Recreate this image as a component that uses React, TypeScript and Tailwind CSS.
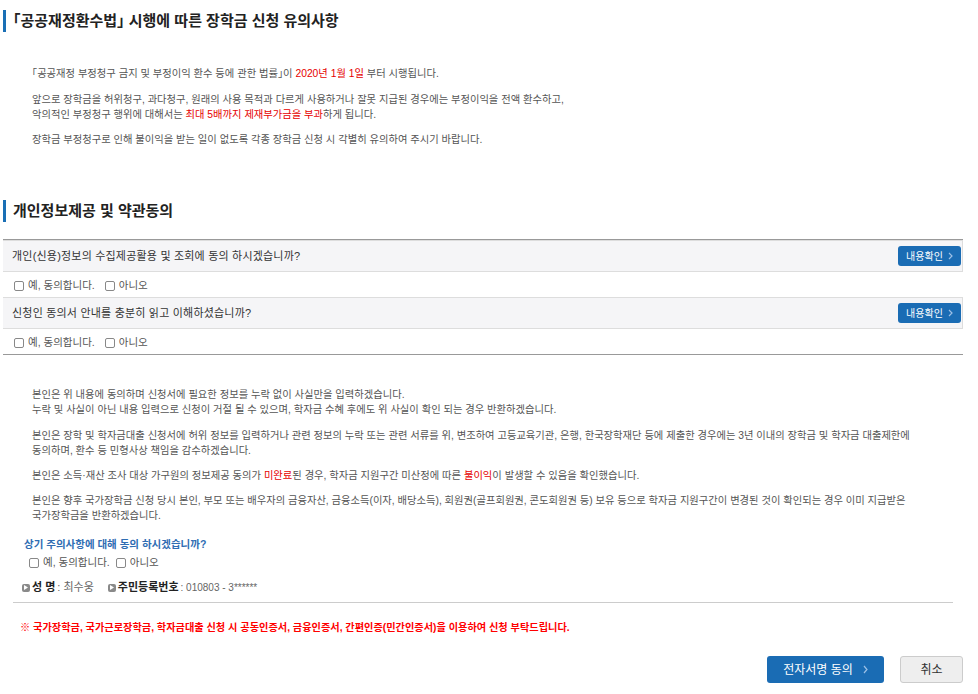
import React from "react";

function Bullet() {
  return (
    <span className="inline-flex h-[8px] w-[8px] items-center justify-center rounded-[2px] bg-[#8a8a8a]">
      <svg width="4" height="5" viewBox="0 0 4 5">
        <path d="M0 0 L4 2.5 L0 5 Z" fill="#fff" />
      </svg>
    </span>
  );
}

function Check({ label }: { label: string }) {
  return (
    <label className="flex items-center gap-[4px]">
      <span className="h-[10px] w-[10px] rounded-[2px] border border-[#888] bg-white" />
      <span>{label}</span>
    </label>
  );
}

function SectionTitle({ children }: { children: React.ReactNode }) {
  return (
    <div className="flex h-[22px] items-center border-l-[3px] border-[#1a6fb5] pl-[7px]">
      <h2 className="text-[15px] font-semibold text-[#222]">{children}</h2>
    </div>
  );
}

function AgreeRow({ question }: { question: string }) {
  return (
    <>
      <div className="flex h-[32px] items-center justify-between border-y border-r border-[#ddd] bg-[#f5f5f7] pl-[9px] pr-[1px]">
        <span className="text-[11px] tracking-[0.2px] text-[#333]">{question}</span>
        <button className="flex h-[20px] w-[63px] items-center justify-center gap-[5px] rounded-[3px] bg-[#1a6cb4] text-[10px] text-white">
          내용확인
          <svg width="5" height="8" viewBox="0 0 5 8">
            <path d="M1 1 L4 4 L1 7" stroke="#9cc0e6" strokeWidth="1.2" fill="none" />
          </svg>
        </button>
      </div>
      <div className="flex h-[25px] items-center gap-[10px] pl-[11px] pt-[3px] text-[10.5px] text-[#555]">
        <Check label="예, 동의합니다." />
        <Check label="아니오" />
      </div>
    </>
  );
}

export default function App() {
  return (
    <div className="h-[694px] w-[978px] bg-white px-[3px] font-['Liberation_Sans','Noto_Sans_CJK_KR',sans-serif] text-[#555] [font-feature-settings:'halt']">
      <div className="w-[960px]">
        <div className="pt-[10px]">
          <SectionTitle>「공공재정환수법」 시행에 따른 장학금 신청 유의사항</SectionTitle>
        </div>

        <div className="mt-[34px] whitespace-nowrap pl-[29px] text-[10.3px] leading-[15px]">
          <p>
            「공공재정 부정청구 금지 및 부정이익 환수 등에 관한 법률」이{" "}
            <span className="text-[#e60000]">2020년 1월 1일</span> 부터 시행됩니다.
          </p>
          <p className="mt-[11px]">
            앞으로 장학금을 허위청구, 과다청구, 원래의 사용 목적과 다르게 사용하거나 잘못 지급된 경우에는 부정이익을 전액 환수하고,
            <br />
            악의적인 부정청구 행위에 대해서는{" "}
            <span className="text-[#e60000]">최대 5배까지 제재부가금을 부과</span>하게 됩니다.
          </p>
          <p className="mt-[10px]">
            장학금 부정청구로 인해 불이익을 받는 일이 없도록 각종 장학금 신청 시 각별히 유의하여 주시기 바랍니다.
          </p>
        </div>

        <div className="mt-[53px]">
          <SectionTitle>개인정보제공 및 약관동의</SectionTitle>
        </div>

        <div className="mt-[17px] border-y border-[#999]">
          <AgreeRow question="개인(신용)정보의 수집제공활용 및 조회에 동의 하시겠습니까?" />
          <AgreeRow question="신청인 동의서 안내를 충분히 읽고 이해하셨습니까?" />
        </div>

        <div className="mt-[32px] whitespace-nowrap pl-[29px] text-[10.3px] leading-[15px]">
          <p>
            본인은 위 내용에 동의하며 신청서에 필요한 정보를 누락 없이 사실만을 입력하겠습니다.
            <br />
            누락 및 사실이 아닌 내용 입력으로 신청이 거절 될 수 있으며, 학자금 수혜 후에도 위 사실이 확인 되는 경우 반환하겠습니다.
          </p>
          <p className="mt-[11px]">
            본인은 장학 및 학자금대출 신청서에 허위 정보를 입력하거나 관련 정보의 누락 또는 관련 서류를 위, 변조하여 고등교육기관, 은행, 한국장학재단 등에 제출한 경우에는 3년 이내의 장학금 및 학자금 대출제한에
            <br />
            동의하며, 환수 등 민형사상 책임을 감수하겠습니다.
          </p>
          <p className="mt-[10px]">
            본인은 소득·재산 조사 대상 가구원의 정보제공 동의가 <span className="text-[#e60000]">미완료</span>된 경우, 학자금 지원구간 미산정에 따른{" "}
            <span className="text-[#e60000]">불이익</span>이 발생할 수 있음을 확인했습니다.
          </p>
          <p className="mt-[10px]">
            본인은 향후 국가장학금 신청 당시 본인, 부모 또는 배우자의 금융자산, 금융소득(이자, 배당소득), 회원권(골프회원권, 콘도회원권 등) 보유 등으로 학자금 지원구간이 변경된 것이 확인되는 경우 이미 지급받은
            <br />
            국가장학금을 반환하겠습니다.
          </p>
        </div>

        <div className="mt-[14px] pl-[21px] text-[10.5px] leading-[15px] font-semibold text-[#2f6db3]">
          상기 주의사항에 대해 동의 하시겠습니까?
        </div>
        <div className="mt-[3px] flex h-[15px] items-center gap-[6px] pl-[26px] text-[10.5px] text-[#555]">
          <Check label="예, 동의합니다." />
          <Check label="아니오" />
        </div>

        <div className="mt-[10px] flex h-[15px] items-center gap-[14px] pl-[19px] text-[11px]">
          <span className="flex items-center gap-[2px]">
            <Bullet />
            <b className="text-[#222]">성 명</b>
            <span className="text-[#666]"> : 최수웅</span>
          </span>
          <span className="flex items-center gap-[2px]">
            <Bullet />
            <b className="text-[#222]">주민등록번호</b>
            <span className="text-[10px] text-[#666]"> : 010803 - 3******</span>
          </span>
        </div>

        <div className="mx-[10px] mt-[7px] border-t border-[#ccc]" />

        <div className="mt-[17px] pl-[17px] text-[10.2px] leading-[15px] font-bold text-[#f00]">
          ※ 국가장학금, 국가근로장학금, 학자금대출 신청 시 공동인증서, 금융인증서, 간편인증(민간인증서)을 이용하여 신청 부탁드립니다.
        </div>

        <div className="mt-[21px] flex justify-end gap-[16px]">
          <button className="flex h-[27px] w-[117px] items-center justify-center gap-[10px] rounded-[3px] bg-[#1a6cb4] text-[12px] text-white">
            전자서명 동의
            <svg width="5" height="9" viewBox="0 0 5 9">
              <path d="M1 1 L4 4.5 L1 8" stroke="#9cc0e6" strokeWidth="1.2" fill="none" />
            </svg>
          </button>
          <button className="h-[27px] w-[63px] rounded-[3px] border border-[#ccc] bg-[#eee] text-[12px] text-[#333]">
            취소
          </button>
        </div>
      </div>
    </div>
  );
}
